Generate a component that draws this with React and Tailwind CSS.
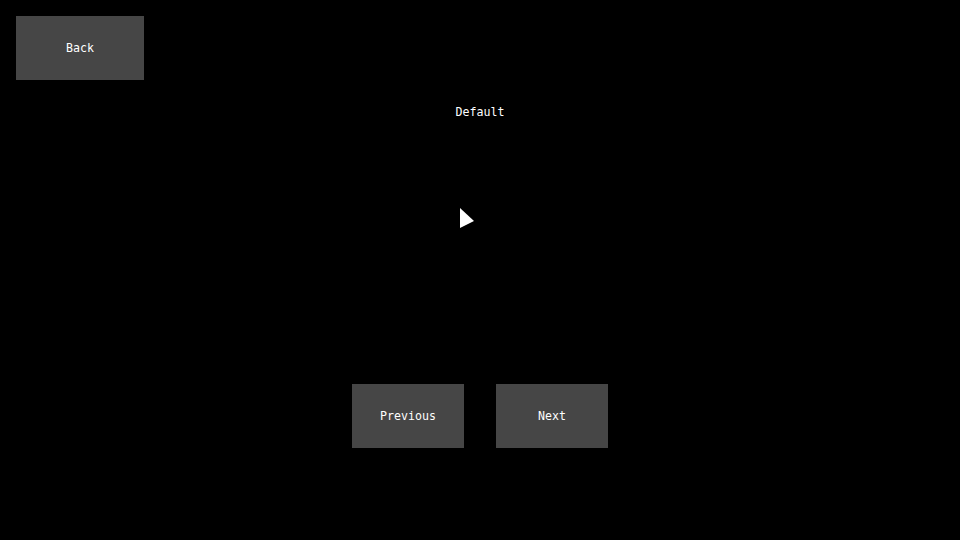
import React from 'react';

const Btn = ({ label, className }) => (
    <button className={`bg-[#464646] text-white text-[11.6px] leading-[14px] flex items-center justify-center ${className}`}>
        {label}
    </button>
);

export default function App() {
    return (
        <div
            className="w-[960px] h-[540px] bg-black flex flex-col p-4 text-white"
            style={{ fontFamily: '"DejaVu Sans Mono", monospace' }}
        >
            <Btn label="Back" className="w-32 h-16" />
            <div className="mt-[25px] text-center text-[11.6px] leading-[14px]">Default</div>
            <div className="mt-[89px] ml-[444px]">
                <svg width="14" height="20" viewBox="0 0 14 20" className="block">
                    <polygon points="0,0 14,13 0,20" fill="#fff" />
                </svg>
            </div>
            <div className="mt-[156px] flex justify-center gap-8">
                <Btn label="Previous" className="w-28 h-16" />
                <Btn label="Next" className="w-28 h-16" />
            </div>
        </div>
    );
}
